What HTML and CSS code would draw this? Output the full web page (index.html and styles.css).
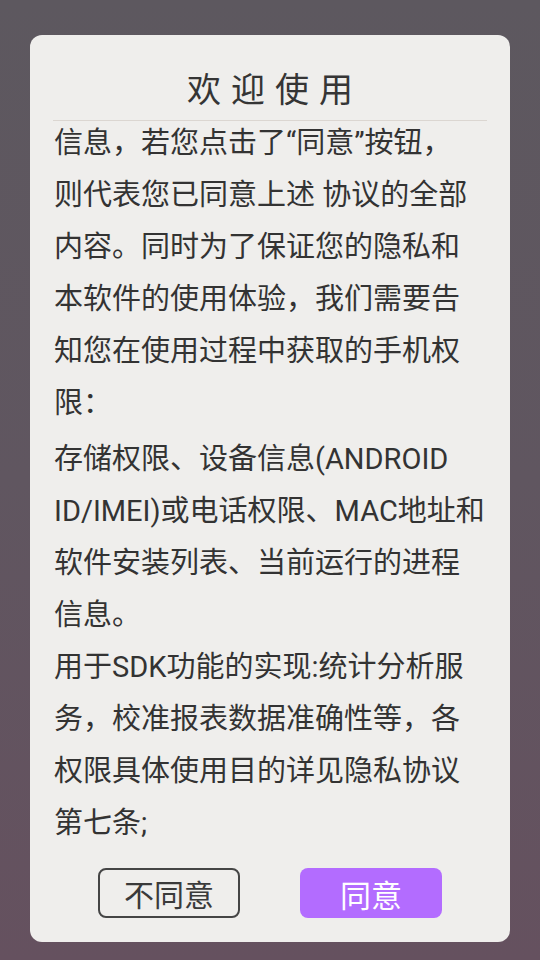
FILE: index.html
```html
<!DOCTYPE html>
<html lang="zh-CN">
<head>
<meta charset="utf-8">
<title>欢迎使用</title>
<link rel="stylesheet" href="styles.css">
</head>
<body>
<div class="dialog">
  <h1 class="title">欢迎使用</h1>
  <div class="divider"></div>
  <div class="scroll">
    <div class="content">
      <p class="para first">信息，若您点击了“同意”按钮，<br>则代表您已同意上述 协议的全部<br>内容。同时为了保证您的隐私和<br>本软件的使用体验，我们需要告<br>知您在使用过程中获取的手机权<br>限：</p>
      <p class="para second">存储权限、设备信息(ANDROID<br>ID/IMEI)或电话权限、MAC地址和<br>软件安装列表、当前运行的进程<br>信息。</p>
      <p class="para">用于SDK功能的实现:统计分析服<br>务，校准报表数据准确性等，各<br>权限具体使用目的详见隐私协议<br>第七条;</p>
    </div>
  </div>
  <div class="actions">
    <button class="btn btn-outline">不同意</button>
    <button class="btn btn-primary">同意</button>
  </div>
</div>
</body>
</html>
```

FILE: styles.css
```css
html, body {
  margin: 0;
  padding: 0;
}
body {
  width: 540px;
  height: 960px;
  background: linear-gradient(180deg, #5d585f 0%, #605660 50%, #65515f 100%);
  font-family: Roboto, "Noto Sans CJK SC", sans-serif;
  color: #333333;
  display: flex;
  flex-direction: column;
  align-items: center;
  overflow: hidden;
}
.dialog {
  box-sizing: border-box;
  margin-top: 35px;
  width: 480px;
  height: 907px;
  background: #efeeec;
  border-radius: 12px;
  display: flex;
  flex-direction: column;
  padding: 29px 23px 24px 23px;
}
.title {
  margin: 0;
  font-family: "Noto Sans CJK SC", sans-serif;
  font-weight: 400;
  font-size: 34px;
  line-height: 48px;
  letter-spacing: 10px;
  padding-left: 10px;
  text-align: center;
  color: #353535;
}
.divider {
  height: 1px;
  background: #dbd6d1;
  margin-top: 8px;
}
.scroll {
  flex: 1;
  overflow: hidden;
  padding-left: 1px;
}
.content {
  margin-top: -4px;
}
.para {
  margin: 0;
  font-size: 29px;
  line-height: 52px;
  white-space: nowrap;
}
.second {
  margin-top: 4px;
}
.actions {
  display: flex;
  justify-content: center;
  gap: 60px;
}
.btn {
  box-sizing: border-box;
  width: 142px;
  height: 50px;
  border-radius: 8px;
  font-family: "Noto Sans CJK SC", sans-serif;
  font-size: 30px;
  line-height: 1;
  padding: 0;
  display: flex;
  align-items: center;
  justify-content: center;
  cursor: pointer;
}
.btn-outline {
  background: transparent;
  border: 2px solid #454545;
  color: #3a3a3a;
}
.btn-primary {
  background: #b36cff;
  border: none;
  color: #ffffff;
  font-size: 31px;
}
```
